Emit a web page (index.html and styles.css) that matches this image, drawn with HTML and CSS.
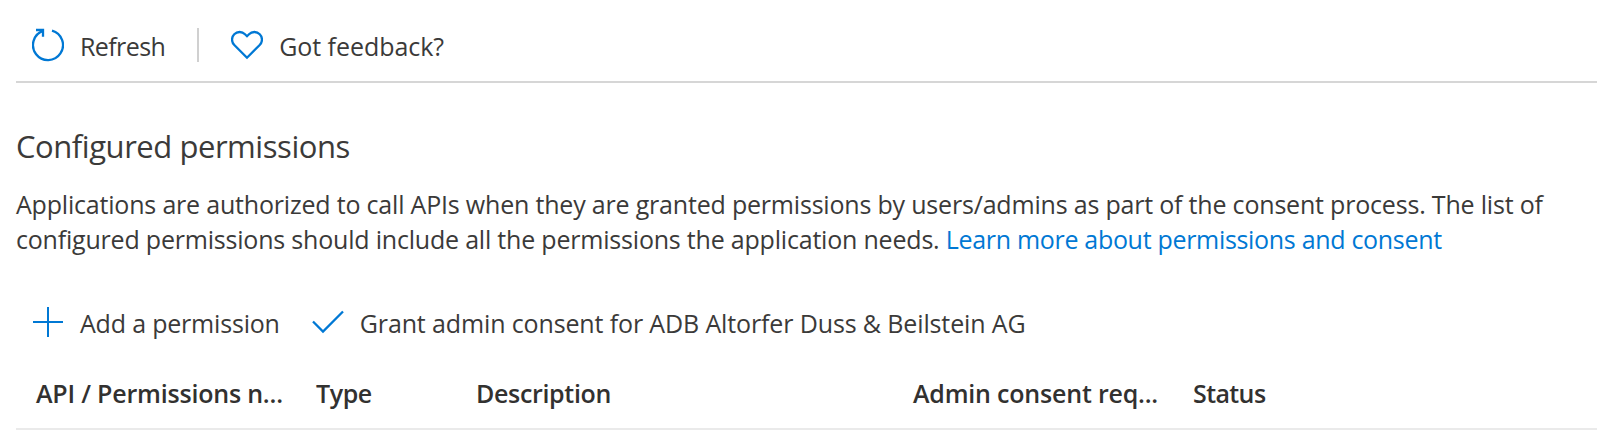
FILE: index.html
```
<!DOCTYPE html>
<html lang="en">
<head>
    <meta charset="UTF-8">
    <meta name="viewport" content="width=device-width, initial-scale=1.0">
    <title>API permissions</title>
    <link rel="stylesheet" href="styles.css">
</head>
<body>
    <div class="container">
        <div class="toolbar">
            <button class="command refresh">
                <svg class="icon" viewBox="0 0 32 34">
                    <path d="M20 2.6A15 15 0 1 1 11 2.9"/>
                    <path d="M4 2H11V8.7"/>
                </svg>
                <span>Refresh</span>
            </button>
            <div class="divider"></div>
            <button class="command feedback">
                <svg class="icon" viewBox="0 0 32 34">
                    <path d="M16 29.7L3.3 17A7.6 7.6 0 0 1 14 6.2L16 8.2L18 6.2A7.6 7.6 0 0 1 28.7 17Z"/>
                </svg>
                <span>Got feedback?</span>
            </button>
        </div>

        <h2 class="title">Configured permissions</h2>
        <p class="description">
            <span class="line-one">Applications are authorized to call APIs when they are granted permissions by users/admins as part of the consent process. The list of</span><br>
            <span class="line-two">configured permissions should include all the permissions the application needs. <a href="#">Learn more about permissions and consent</a></span>
        </p>

        <div class="actions">
            <button class="command add">
                <svg class="icon" viewBox="0 0 32 34">
                    <path d="M16 2V32M1 17H31"/>
                </svg>
                <span>Add a permission</span>
            </button>
            <button class="command grant">
                <svg class="icon" viewBox="0 0 32 34">
                    <path d="M1 16.5L11 26.5L31 6.5"/>
                </svg>
                <span>Grant admin consent for ADB Altorfer Duss &amp; Beilstein AG</span>
            </button>
        </div>

        <div class="table-header">
            <div class="col-name">API / Permissions n...</div>
            <div class="col-type">Type</div>
            <div class="col-description">Description</div>
            <div class="col-consent">Admin consent req...</div>
            <div class="col-status">Status</div>
        </div>
    </div>
</body>
</html>
```

FILE: styles.css
```
body {
    margin: 0;
    background-color: #fff;
    color: #3b3a39;
    font-family: "Open Sans", "Noto Sans", sans-serif;
    font-size: 25px;
}
.container {
    margin: 0 11px 0 16px;
}
.toolbar, .actions, .table-header {
    display: flex;
    align-items: center;
    box-sizing: border-box;
    white-space: nowrap;
}
.toolbar {
    height: 83px;
    padding: 11px 0 0 16px;
    border-bottom: 2px solid #d6d6d6;
}
.command {
    display: flex;
    align-items: center;
    gap: 16px;
    padding: 0;
    border: none;
    background: none;
    color: inherit;
    font: inherit;
    line-height: 36px;
    cursor: pointer;
}
.refresh {
    letter-spacing: -0.6px;
}
.feedback {
    letter-spacing: -0.05px;
}
.add {
    letter-spacing: -0.19px;
}
.grant {
    letter-spacing: -0.13px;
}
.icon {
    width: 32px;
    height: 34px;
    margin-bottom: 2px;
    fill: none;
    stroke: #0078d4;
    stroke-width: 2;
}
.refresh .icon, .feedback .icon, .grant .icon {
    stroke-width: 2.3;
}
.divider {
    width: 2px;
    height: 34px;
    margin: 0 32px;
    margin-bottom: 2px;
    background-color: #d0d0d0;
}
.title {
    margin: 43px 0 0;
    font-size: 31px;
    font-weight: 400;
    line-height: 40px;
    letter-spacing: -0.45px;
}
.description {
    margin: 21px 0 0;
    line-height: 35px;
    white-space: nowrap;
}
.line-one {
    letter-spacing: -0.193px;
}
.line-two {
    letter-spacing: -0.2px;
}
.description a {
    color: #0078d4;
    text-decoration: none;
    letter-spacing: -0.31px;
}
.actions {
    height: 40px;
    margin-top: 46px;
    padding-left: 16px;
    gap: 32px;
}
.table-header {
    height: 72px;
    margin-top: 15px;
    padding-left: 20px;
    border-bottom: 2px solid #eaeaea;
    color: #323130;
    font-weight: 600;
    letter-spacing: -0.2px;
}
.col-name {
    width: 280px;
}
.col-type {
    width: 160px;
    letter-spacing: -0.4px;
}
.col-description {
    width: 437px;
    letter-spacing: -0.33px;
}
.col-consent {
    width: 280px;
}
.col-status {
    letter-spacing: -0.6px;
}
```
